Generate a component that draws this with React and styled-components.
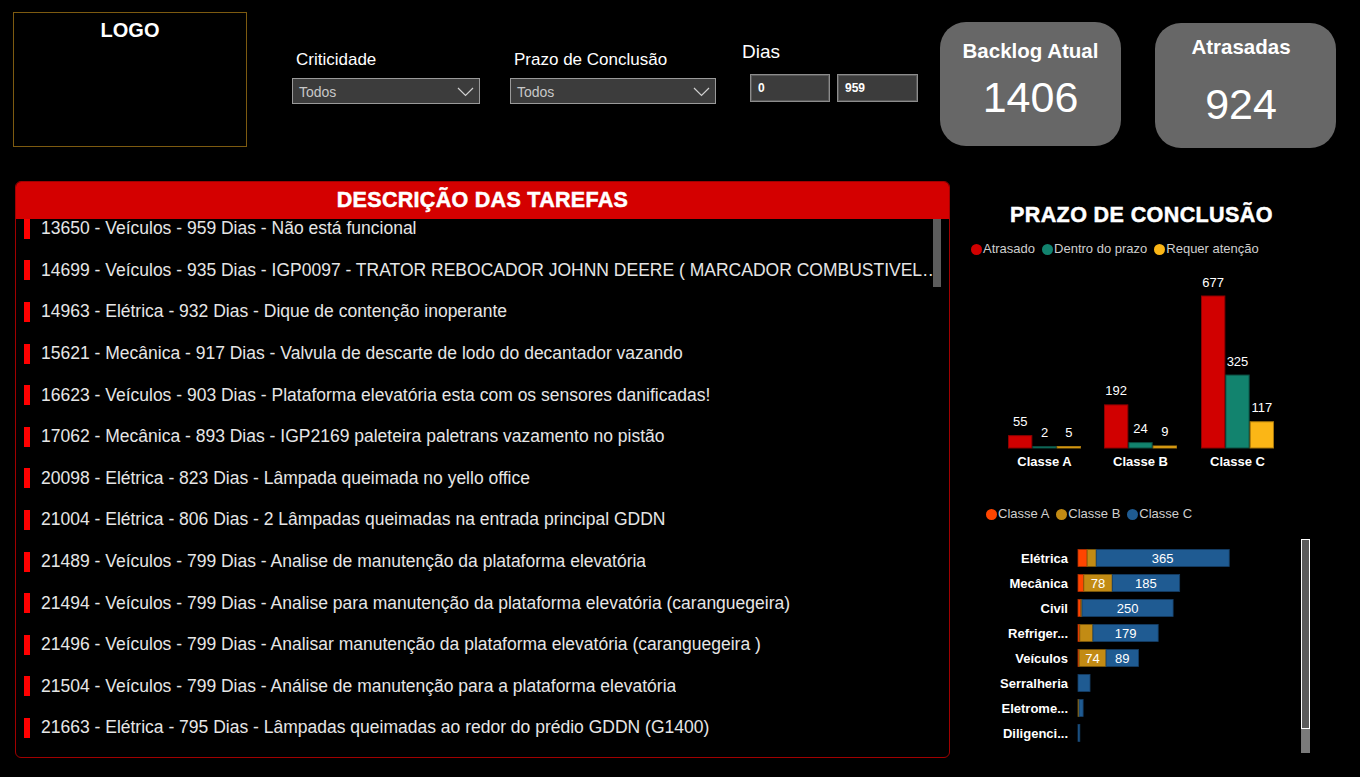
import React from "react"
import styled, { createGlobalStyle } from "styled-components"

const GlobalStyle = createGlobalStyle`
  body {
    margin: 0;
    background: #000;
    font-family: "Liberation Sans", Arial, sans-serif;
  }
`

const FONT = `"Liberation Sans", Arial, sans-serif`

const tasks = [
  "13650 - Veículos - 959 Dias - Não está funcional",
  "14699 - Veículos - 935 Dias - IGP0097 - TRATOR REBOCADOR JOHNN DEERE ( MARCADOR COMBUSTIVEL…",
  "14963 - Elétrica - 932 Dias - Dique de contenção inoperante",
  "15621 - Mecânica - 917 Dias - Valvula de descarte de lodo do decantador vazando",
  "16623 - Veículos - 903 Dias - Plataforma elevatória esta com os sensores danificadas!",
  "17062 - Mecânica - 893 Dias - IGP2169 paleteira paletrans vazamento no pistão",
  "20098 - Elétrica - 823 Dias - Lâmpada queimada no yello office",
  "21004 - Elétrica - 806 Dias - 2 Lâmpadas queimadas na entrada principal GDDN",
  "21489 - Veículos - 799 Dias - Analise de manutenção da plataforma elevatória",
  "21494 - Veículos - 799 Dias - Analise para manutenção da plataforma elevatória (caranguegeira)",
  "21496 - Veículos - 799 Dias - Analisar manutenção da plataforma elevatória (caranguegeira )",
  "21504 - Veículos - 799 Dias - Análise de manutenção para a plataforma elevatória",
  "21663 - Elétrica - 795 Dias - Lâmpadas queimadas ao redor do prédio GDDN (G1400)",
]

const columnGroups = [
  { label: "Classe A", x: 1008, vals: [55, 2, 5] },
  { label: "Classe B", x: 1104, vals: [192, 24, 9] },
  { label: "Classe C", x: 1201, vals: [677, 325, 117] },
]

const columnColors = [
  { fill: "#d10000", stroke: "#8e0000" },
  { fill: "#12836e", stroke: "#0b4a3f" },
  { fill: "#fbb616", stroke: "#a8760c" },
]

const categories = [
  { name: "Elétrica", vals: [25, 25, 365] },
  { name: "Mecânica", vals: [16, 78, 185] },
  { name: "Civil", vals: [8, 3, 250] },
  { name: "Refriger...", vals: [5, 36, 179] },
  { name: "Veículos", vals: [3, 74, 89] },
  { name: "Serralheria", vals: [0, 0, 33] },
  { name: "Eletrome...", vals: [0, 3, 11] },
  { name: "Diligenci...", vals: [0, 0, 5] },
]

const classColors = [
  { fill: "#ff4500", stroke: "#b33000" },
  { fill: "#c28b14", stroke: "#7e5a0c" },
  { fill: "#1f5b92", stroke: "#163f66" },
]

function ColumnChart() {
  const ox = 950
  const oy = 257
  const base = 448 - oy
  const scale = 152 / 677
  const bw = 24.33
  return (
    <svg width="410" height="215" style={{ display: "block" }}>
      {columnGroups.map((g) => (
        <g key={g.label}>
          {g.vals.map((v, i) => {
            const h = Math.max(v * scale, 1.5)
            const x = g.x - ox + i * bw
            return (
              <g key={i}>
                <rect
                  x={x + 0.5}
                  y={base - h}
                  width={bw - 1}
                  height={h}
                  fill={columnColors[i].fill}
                  stroke={columnColors[i].stroke}
                  strokeWidth="1"
                />
                <text
                  x={x + bw / 2}
                  y={base - h - 9.5}
                  fill="#fff"
                  fontSize="13"
                  fontFamily={FONT}
                  textAnchor="middle"
                >
                  {v}
                </text>
              </g>
            )
          })}
          <text
            x={g.x - ox + (bw * 3) / 2}
            y={465.5 - oy}
            fill="#fff"
            fontSize="13"
            fontWeight="bold"
            fontFamily={FONT}
            textAnchor="middle"
          >
            {g.label}
          </text>
        </g>
      ))}
    </svg>
  )
}

function BarChart() {
  const ox = 950
  const oy = 522
  const x0 = 1078 - ox
  const scale = 133 / 365
  return (
    <svg width="410" height="240" style={{ display: "block" }}>
      {categories.map((c, r) => {
        const cy = 558 - oy + r * 25
        let x = x0
        return (
          <g key={c.name}>
            <text
              x={1068 - ox}
              y={cy + 4.5}
              fill="#fff"
              fontSize="13"
              fontWeight="bold"
              fontFamily={FONT}
              textAnchor="end"
            >
              {c.name}
            </text>
            {c.vals.map((v, i) => {
              if (!v) return null
              const w = v * scale
              const sx = x
              x += w
              return (
                <g key={i}>
                  <rect
                    x={sx}
                    y={cy - 8.5}
                    width={w}
                    height="17"
                    fill={classColors[i].fill}
                    stroke={classColors[i].stroke}
                    strokeWidth="0.8"
                  />
                  {w >= 24 && (
                    <text
                      x={sx + w / 2}
                      y={cy + 4.5}
                      fill="#fff"
                      fontSize="13"
                      fontFamily={FONT}
                      textAnchor="middle"
                    >
                      {v}
                    </text>
                  )}
                </g>
              )
            })}
          </g>
        )
      })}
      <rect x={1301 - ox} y={539 - oy} width="9" height="214" fill="#7a7a7a" />
      <rect x={1301.5 - ox} y={539.5 - oy} width="8" height="189" fill="#5c5c5c" stroke="#fff" strokeWidth="1" />
    </svg>
  )
}

function Chevron() {
  return (
    <svg width="17" height="10" viewBox="0 0 17 10">
      <polyline points="1,1 8.5,8.5 16,1" fill="none" stroke="#d0d0d0" strokeWidth="1.2" />
    </svg>
  )
}

export default function App() {
  return (
    <Page>
      <GlobalStyle />
      <TopBar>
        <LogoBox>LOGO</LogoBox>

        <FilterGroup $ml={45} $mt={38}>
          <FilterLabel>Criticidade</FilterLabel>
          <Select $w={188}>
            <span>Todos</span>
            <Chevron />
          </Select>
        </FilterGroup>

        <FilterGroup $ml={30} $mt={38}>
          <FilterLabel>Prazo de Conclusão</FilterLabel>
          <Select $w={206}>
            <span>Todos</span>
            <Chevron />
          </Select>
        </FilterGroup>

        <FilterGroup $ml={26} $mt={29}>
          <DiasLabel>Dias</DiasLabel>
          <RangeRow>
            <RangeInput $w={80}>0</RangeInput>
            <RangeInput $w={81}>959</RangeInput>
          </RangeRow>
        </FilterGroup>

        <Card $ml={22} $mt={10} $h={124} $pt={18} $gap={12} $pr={0}>
          <CardTitle>Backlog Atual</CardTitle>
          <CardValue>1406</CardValue>
        </Card>

        <Card $ml={34} $mt={11} $h={125} $pt={13} $gap={23} $pr={9}>
          <CardTitle>Atrasadas</CardTitle>
          <CardValue>924</CardValue>
        </Card>
      </TopBar>

      <Main>
        <TaskPanel>
          <PanelHeader>DESCRIÇÃO DAS TAREFAS</PanelHeader>
          <ListViewport>
            <TaskList>
              {tasks.map((t) => (
                <TaskRow key={t}>
                  <Marker />
                  <TaskText>{t}</TaskText>
                </TaskRow>
              ))}
            </TaskList>
            <ListScroll />
          </ListViewport>
        </TaskPanel>

        <ChartColumn>
          <ChartTitle>PRAZO DE CONCLUSÃO</ChartTitle>
          <Legend $pl={21} $mt={14}>
            <LegendItem><Dot $c="#d10000" />Atrasado</LegendItem>
            <LegendItem><Dot $c="#12836e" />Dentro do prazo</LegendItem>
            <LegendItem><Dot $c="#fbb616" />Requer atenção</LegendItem>
          </Legend>
          <ColumnChart />
          <Legend $pl={36} $mt={34}>
            <LegendItem><Dot $c="#ff4500" />Classe A</LegendItem>
            <LegendItem><Dot $c="#c28b14" />Classe B</LegendItem>
            <LegendItem><Dot $c="#1f5b92" />Classe C</LegendItem>
          </Legend>
          <BarChart />
        </ChartColumn>
      </Main>
    </Page>
  )
}

const Page = styled.div`
  width: 1360px;
  height: 777px;
  overflow: hidden;
  background: #000;
  color: #fff;
  font-family: ${FONT};
`

const TopBar = styled.div`
  display: flex;
  align-items: flex-start;
  height: 181px;
  box-sizing: border-box;
  padding: 12px 0 0 13px;
`

const LogoBox = styled.div`
  width: 234px;
  height: 135px;
  box-sizing: border-box;
  border: 1px solid #7d5a10;
  text-align: center;
  font-size: 20px;
  font-weight: bold;
  line-height: 22px;
  padding-top: 6px;
`

const FilterGroup = styled.div`
  display: flex;
  flex-direction: column;
  margin-left: ${(p) => p.$ml}px;
  margin-top: ${(p) => p.$mt}px;
`

const FilterLabel = styled.div`
  font-size: 17px;
  line-height: 20px;
  padding-left: 4px;
  margin-bottom: 8px;
`

const DiasLabel = styled.div`
  font-size: 19px;
  line-height: 22px;
  margin-bottom: 11px;
`

const Select = styled.div`
  width: ${(p) => p.$w}px;
  height: 26px;
  box-sizing: border-box;
  background: #3c3c3c;
  border: 1px solid #9a9a9a;
  display: flex;
  align-items: center;
  justify-content: space-between;
  padding: 1px 5px 0 6px;
  color: #c8c8c8;
  font-size: 14px;
`

const RangeRow = styled.div`
  display: flex;
  gap: 7px;
  padding-left: 8px;
`

const RangeInput = styled.div`
  width: ${(p) => p.$w}px;
  height: 28px;
  box-sizing: border-box;
  background: #3c3c3c;
  border: 1px solid #8c8c8c;
  box-shadow: inset 0 0 0 1px #5a5a5a;
  display: flex;
  align-items: center;
  padding-left: 7px;
  font-size: 12px;
  font-weight: bold;
`

const Card = styled.div`
  width: 181px;
  height: ${(p) => p.$h}px;
  margin-left: ${(p) => p.$ml}px;
  margin-top: ${(p) => p.$mt}px;
  box-sizing: border-box;
  padding-top: ${(p) => p.$pt}px;
  padding-right: ${(p) => p.$pr}px;
  border-radius: 26px;
  background: #676767;
  display: flex;
  flex-direction: column;
  align-items: center;
  gap: ${(p) => p.$gap}px;
`

const CardTitle = styled.div`
  font-size: 20.5px;
  font-weight: bold;
  line-height: 22px;
`

const CardValue = styled.div`
  font-size: 43px;
  line-height: 46px;
`

const Main = styled.div`
  display: flex;
  padding-left: 15px;
`

const TaskPanel = styled.div`
  width: 935px;
  height: 577px;
  box-sizing: border-box;
  border: 1px solid #a00000;
  border-radius: 6px;
  overflow: hidden;
  display: flex;
  flex-direction: column;
`

const PanelHeader = styled.div`
  height: 37px;
  flex-shrink: 0;
  background: #d40000;
  display: flex;
  align-items: center;
  justify-content: center;
  font-size: 21.5px;
  font-weight: bold;
  letter-spacing: 0.3px;
  -webkit-text-stroke: 0.5px #fff;
`

const ListViewport = styled.div`
  position: relative;
  flex: 1;
  overflow: hidden;
`

const TaskList = styled.div`
  margin-top: -11px;
`

const TaskRow = styled.div`
  height: 41.6px;
  display: flex;
  align-items: center;
  padding: 0 9px 0 8px;
`

const Marker = styled.div`
  width: 6px;
  height: 20px;
  flex-shrink: 0;
  background: #ff0000;
`

const TaskText = styled.div`
  margin-left: 11px;
  font-size: 17.5px;
  color: #e6e6e6;
  white-space: nowrap;
  overflow: hidden;
  text-overflow: ellipsis;
`

const ListScroll = styled.div`
  position: absolute;
  top: 0;
  right: 8px;
  width: 8px;
  height: 68px;
  background: #5c5c5c;
`

const ChartColumn = styled.div`
  width: 410px;
  display: flex;
  flex-direction: column;
`

const ChartTitle = styled.div`
  margin-top: 22px;
  padding-left: 60px;
  font-size: 21.5px;
  font-weight: bold;
  line-height: 24px;
  letter-spacing: 0.4px;
  -webkit-text-stroke: 0.5px #fff;
`

const Legend = styled.div`
  display: flex;
  gap: 7px;
  padding-left: ${(p) => p.$pl}px;
  margin-top: ${(p) => p.$mt}px;
  font-size: 13px;
  line-height: 16px;
  color: #cfcfcf;
`

const LegendItem = styled.div`
  display: flex;
  align-items: center;
  gap: 1px;
`

const Dot = styled.span`
  width: 11px;
  height: 11px;
  border-radius: 50%;
  background: ${(p) => p.$c};
`
